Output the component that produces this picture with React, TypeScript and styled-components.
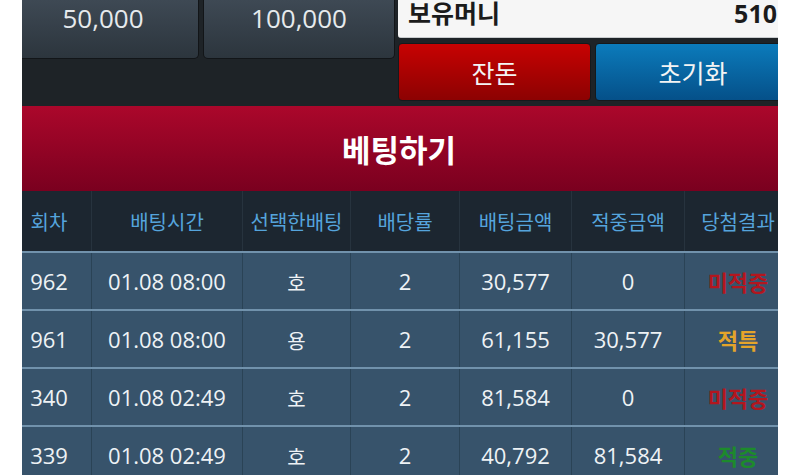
import React from 'react'
import { createGlobalStyle, styled } from 'styled-components'

const GlobalStyle = createGlobalStyle`
  html, body {
    margin: 0;
    padding: 0;
    background: #ffffff;
  }
  body {
    font-family: "Open Sans", "Noto Sans CJK KR", sans-serif;
  }
`

type Result = 'lose' | 'special' | 'win'

const rows: { round: string; time: string; pick: string; odds: string; bet: string; win: string; result: Result }[] = [
  { round: '962', time: '01.08 08:00', pick: '호', odds: '2', bet: '30,577', win: '0', result: 'lose' },
  { round: '961', time: '01.08 08:00', pick: '용', odds: '2', bet: '61,155', win: '30,577', result: 'special' },
  { round: '340', time: '01.08 02:49', pick: '호', odds: '2', bet: '81,584', win: '0', result: 'lose' },
  { round: '339', time: '01.08 02:49', pick: '호', odds: '2', bet: '40,792', win: '81,584', result: 'win' },
]

const resultLabel: Record<Result, string> = {
  lose: '미적중',
  special: '적특',
  win: '적중',
}

const columns = ['회차', '배팅시간', '선택한배팅', '배당률', '배팅금액', '적중금액', '당첨결과']

const App = () => {
  return (
    <>
      <GlobalStyle />
      <Frame>
        <Page>
          <TopBar>
            <AmountGroup>
              <AmountButton>50,000</AmountButton>
              <AmountButton>100,000</AmountButton>
            </AmountGroup>
            <RightPanel>
              <MoneyBox>
                <span>보유머니</span>
                <span>510</span>
              </MoneyBox>
              <ActionRow>
                <ActionButton $tone='red'>잔돈</ActionButton>
                <ActionButton $tone='blue'>초기화</ActionButton>
              </ActionRow>
            </RightPanel>
          </TopBar>

          <Banner>베팅하기</Banner>

          <Table>
            <HeaderRow>
              {columns.map((c) => (
                <HeadCell key={c}>{c}</HeadCell>
              ))}
            </HeaderRow>
            {rows.map((r) => (
              <DataRow key={r.round}>
                <Cell>{r.round}</Cell>
                <Cell>{r.time}</Cell>
                <Cell $korean>{r.pick}</Cell>
                <Cell>{r.odds}</Cell>
                <Cell>{r.bet}</Cell>
                <Cell>{r.win}</Cell>
                <Cell>
                  <ResultText $result={r.result}>{resultLabel[r.result]}</ResultText>
                </Cell>
              </DataRow>
            ))}
          </Table>
        </Page>
      </Frame>
    </>
  )
}

export default App

const Frame = styled.div`
  margin-left: 22px;
  width: 756px;
  height: 475px;
  overflow: hidden;
`

const Page = styled.div`
  margin-left: -15px;
  width: 784px;
`

const TopBar = styled.div`
  display: flex;
  height: 106px;
  background: #1e2327;
`

const AmountGroup = styled.div`
  display: grid;
  grid-template-columns: 192px 192px;
  gap: 4px;
  align-self: flex-start;
`

const AmountButton = styled.div`
  box-sizing: border-box;
  height: 59px;
  padding-top: 2px;
  display: flex;
  justify-content: center;
  line-height: 32px;
  font-size: 26px;
  color: #e6eaed;
  background: linear-gradient(#3e4954, #2c353d);
  border: 1px solid #121518;
  border-top: none;
  border-radius: 0 0 5px 5px;
`

const RightPanel = styled.div`
  flex: 1;
  margin-left: 3px;
  display: flex;
  flex-direction: column;
  gap: 5px;
`

const MoneyBox = styled.div`
  box-sizing: border-box;
  height: 38px;
  padding: 1px 14px 0 10px;
  display: flex;
  justify-content: space-between;
  line-height: 24px;
  font-size: 25px;
  font-weight: 700;
  color: #1b1b1b;
  background: #f6f6f6;
  border-bottom: 1px solid #c9ccce;
  border-radius: 0 0 3px 3px;
`

const ActionRow = styled.div`
  display: grid;
  grid-template-columns: 193px 1fr;
  gap: 4px;
  height: 58px;
`

const ActionButton = styled.div<{ $tone: 'red' | 'blue' }>`
  display: flex;
  align-items: center;
  justify-content: center;
  font-size: 25px;
  color: #f4f4f4;
  border-radius: 4px;
  border: 1px solid #15191c;
  background: ${(p) =>
    p.$tone === 'red'
      ? 'linear-gradient(#c70202, #8c0202)'
      : 'linear-gradient(#0b7bbb, #055089)'};
`

const Banner = styled.div`
  height: 85px;
  display: flex;
  align-items: center;
  justify-content: center;
  font-size: 31px;
  font-weight: 700;
  color: #ffffff;
  background: linear-gradient(#ab072b, #7a001f);
`

const Table = styled.div`
  display: flex;
  flex-direction: column;
`

const grid = `
  display: grid;
  grid-template-columns: 84px 151px 108px 109px 112px 113px 107px;
`

const HeaderRow = styled.div`
  ${grid}
  height: 60px;
  background: #1c2630;
`

const HeadCell = styled.div`
  display: flex;
  align-items: center;
  justify-content: center;
  font-size: 20px;
  color: #55a4dc;
  white-space: nowrap;
  & + & {
    border-left: 1px solid #27333e;
  }
`

const DataRow = styled.div`
  ${grid}
  height: 56px;
  background: #37536b;
  border-top: 2px solid #7192ac;
`

const Cell = styled.div<{ $korean?: boolean }>`
  display: flex;
  align-items: center;
  justify-content: center;
  font-size: ${(p) => (p.$korean ? '20px' : '22px')};
  padding-top: ${(p) => (p.$korean ? '2px' : '0')};
  color: #eef2f5;
  white-space: nowrap;
  & + & {
    border-left: 1px solid #2a4356;
  }
`

const ResultText = styled.span<{ $result: Result }>`
  font-size: 22px;
  font-weight: 700;
  color: ${(p) => (p.$result === 'lose' ? '#b3161e' : p.$result === 'special' ? '#e4a42a' : '#1d8a2c')};
`
